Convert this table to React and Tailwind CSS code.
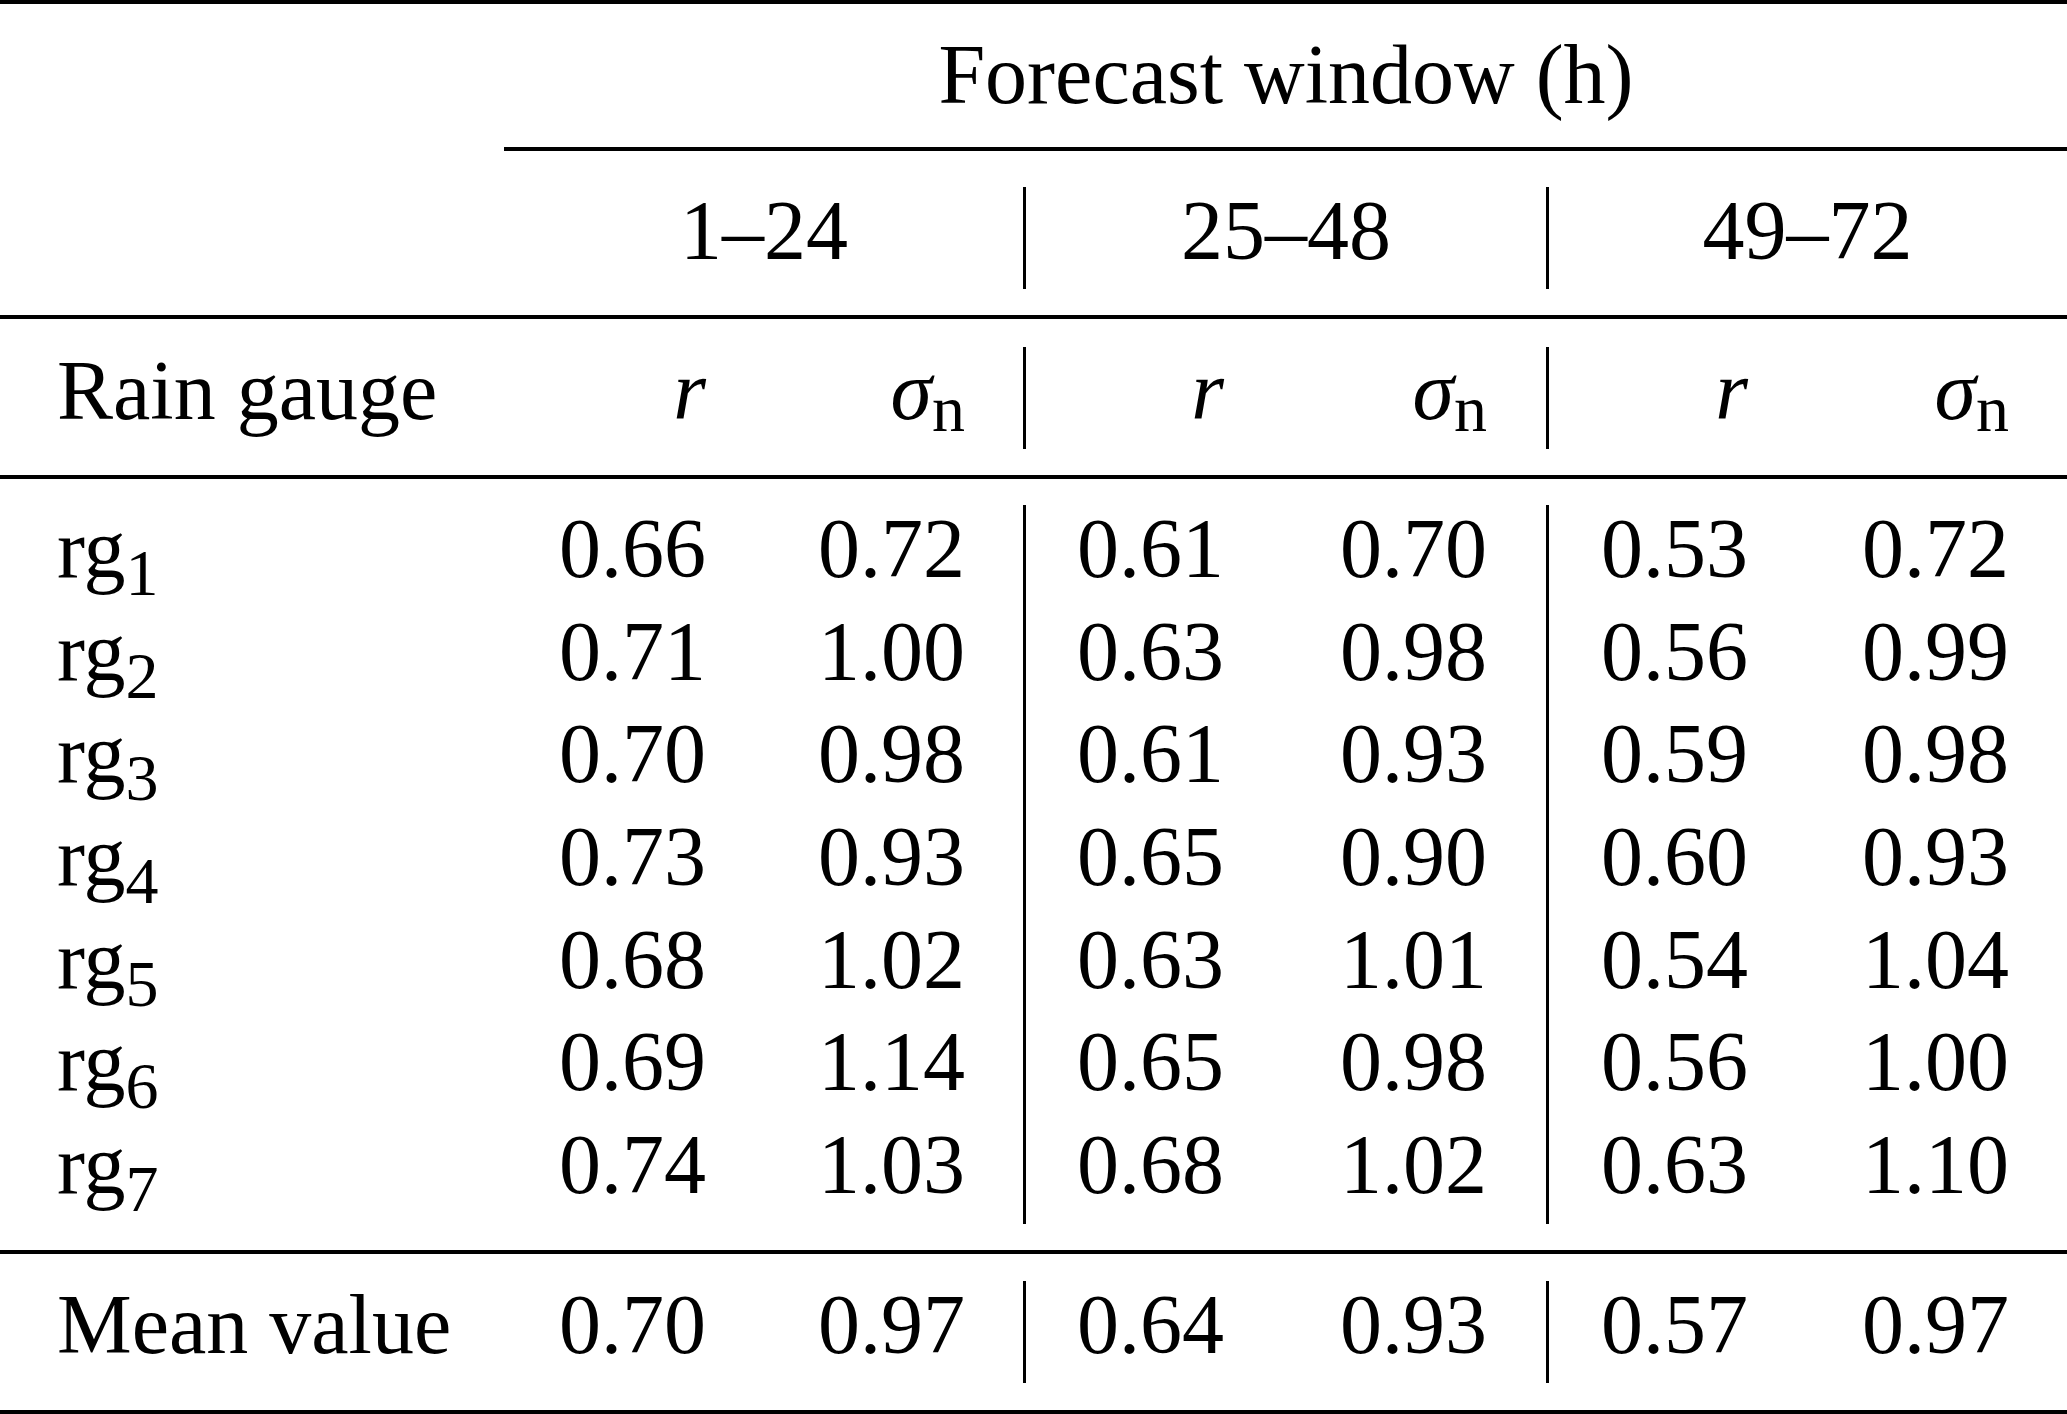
import React from "react";

const rows = [
  ["1", "0.66", "0.72", "0.61", "0.70", "0.53", "0.72"],
  ["2", "0.71", "1.00", "0.63", "0.98", "0.56", "0.99"],
  ["3", "0.70", "0.98", "0.61", "0.93", "0.59", "0.98"],
  ["4", "0.73", "0.93", "0.65", "0.90", "0.60", "0.93"],
  ["5", "0.68", "1.02", "0.63", "1.01", "0.54", "1.04"],
  ["6", "0.69", "1.14", "0.65", "0.98", "0.56", "1.00"],
  ["7", "0.74", "1.03", "0.68", "1.02", "0.63", "1.10"],
];
const mean = ["0.70", "0.97", "0.64", "0.93", "0.57", "0.97"];

const colCls = [
  "pr-[58px]",
  "pr-[58px]",
  "pr-[60px] border-l-[3px] border-black",
  "pr-[59px]",
  "pr-[58px] border-l-[3px] border-black",
  "pr-[57px]",
];

const GRID = "grid grid-cols-[505px_259px_259px_261px_262px_260px_260px]";

function Rule({ className = "" }) {
  return <div className={"h-[4px] bg-black " + className} />;
}

function Sigma() {
  return (
    <span className="whitespace-nowrap">
      <i>σ</i>
      <span className="text-[66px] leading-[0px] align-[-12px]">n</span>
    </span>
  );
}

function DataRow({ label, values, h }) {
  return (
    <div className={GRID}>
      <div className={"pl-[57px] leading-[88px] whitespace-nowrap " + h}>{label}</div>
      {values.map((v, i) => (
        <div key={i} className={"text-right leading-[88px] " + h + " " + colCls[i]}>
          {v}
        </div>
      ))}
    </div>
  );
}

export default function App() {
  return (
    <div className="w-full h-screen overflow-hidden bg-white text-black font-['Liberation_Serif','Times_New_Roman',serif] text-[84px]">
      <Rule />
      <div className="mt-[27px] grid grid-cols-[505px_1fr]">
        <div />
        <div className="h-[102px] leading-[88px] text-center whitespace-nowrap">
          Forecast window (h)
        </div>
      </div>
      <Rule className="mt-[14px] ml-[504px]" />
      <div className="mt-[36px] grid grid-cols-[505px_518px_523px_520px]">
        <div className="h-[102px]" />
        <div className="h-[102px] leading-[88px] text-center">1–24</div>
        <div className="h-[102px] leading-[88px] text-center border-l-[3px] border-black">25–48</div>
        <div className="h-[102px] leading-[88px] text-center border-l-[3px] border-black">49–72</div>
      </div>
      <Rule className="mt-[26px]" />
      <div className={"mt-[28px] " + GRID}>
        <div className="h-[102px] pl-[57px] leading-[88px] whitespace-nowrap">Rain gauge</div>
        {[0, 1, 2, 3, 4, 5].map((i) => (
          <div key={i} className={"h-[102px] text-right leading-[88px] " + colCls[i]}>
            {i % 2 === 0 ? <i>r</i> : <Sigma />}
          </div>
        ))}
      </div>
      <Rule className="mt-[26px]" />
      <div className="mt-[26px]">
        {rows.map((r) => (
          <DataRow
            key={r[0]}
            h="h-[102.7px]"
            label={
              <span>
                rg<span className="text-[66px] leading-[0px] align-[-18px]">{r[0]}</span>
              </span>
            }
            values={r.slice(1)}
          />
        ))}
      </div>
      <Rule className="mt-[26px]" />
      <div className="mt-[27px]">
        <DataRow label="Mean value" values={mean} h="h-[102px]" />
      </div>
      <Rule className="mt-[27px]" />
    </div>
  );
}
